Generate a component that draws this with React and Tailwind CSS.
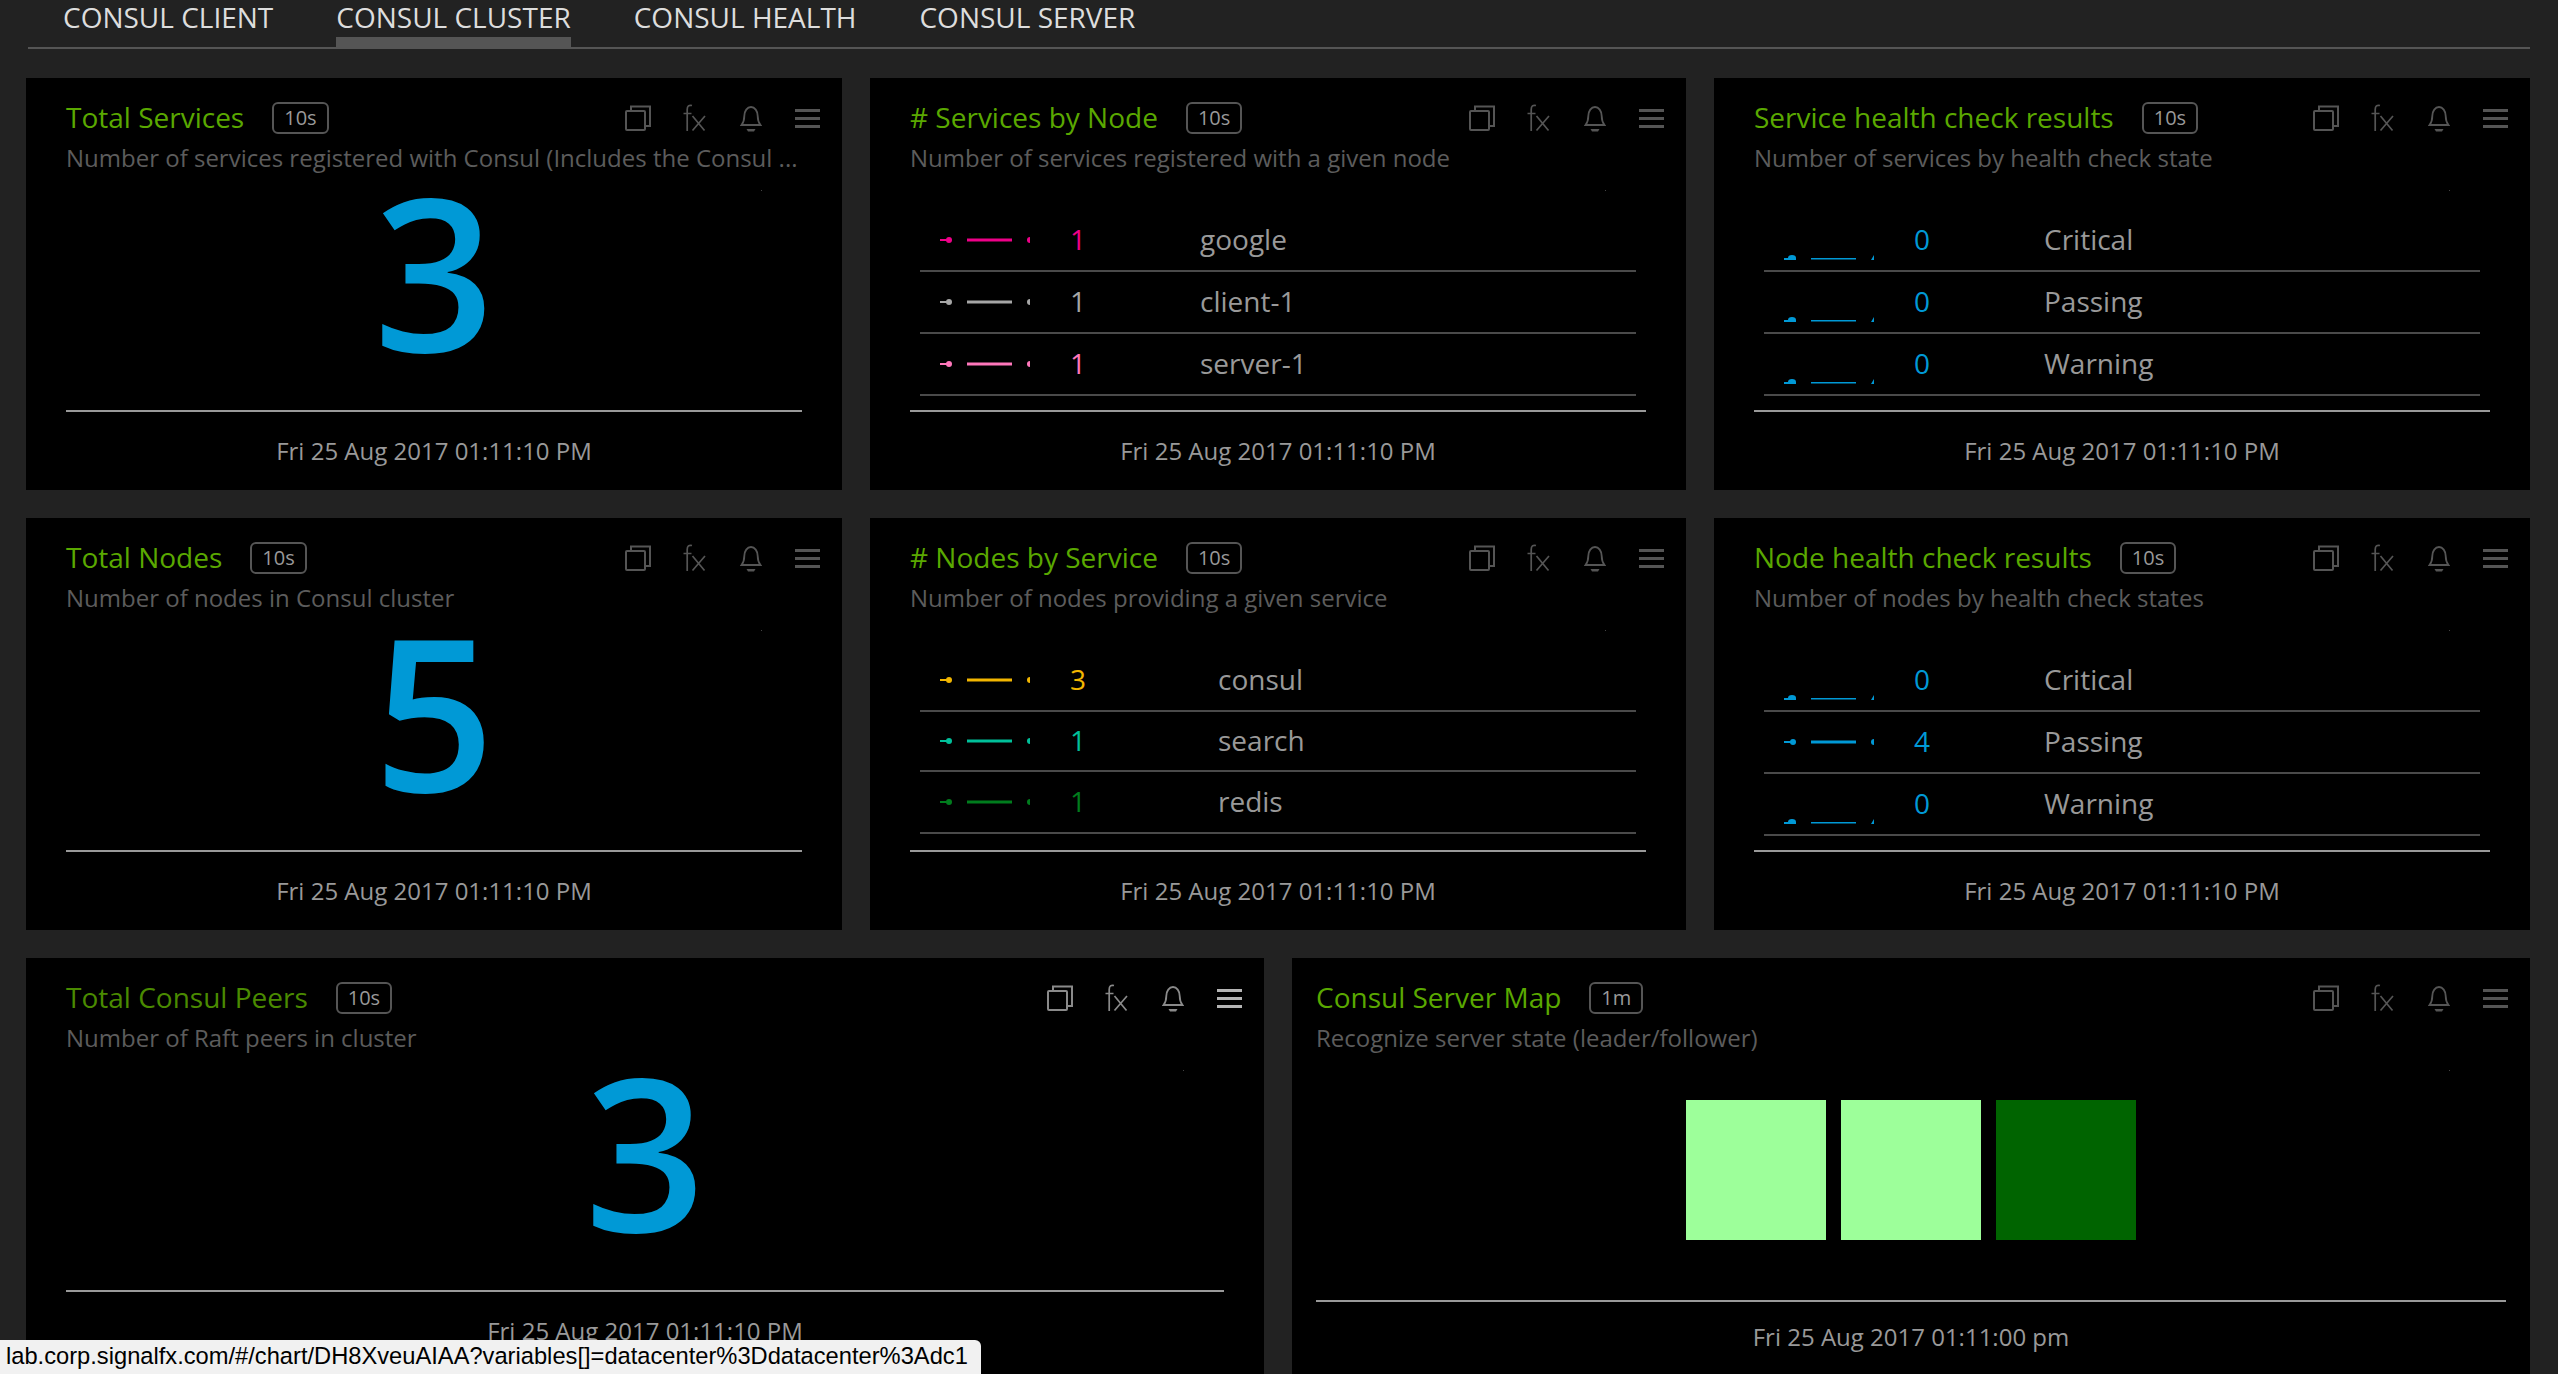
const font = { fontFamily: '"Open Sans", sans-serif' };

const CopyIcon = () => (
  <svg width="28" height="28" viewBox="0 0 28 28" fill="none" stroke="currentColor" strokeWidth="2">
    <rect x="2" y="7" width="19" height="19" rx="1" />
    <path d="M7 7V2.5h19V22h-5" />
  </svg>
);

const FxIcon = () => (
  <svg width="24" height="28" viewBox="0 0 24 28" fill="none" stroke="currentColor" strokeWidth="1.7">
    <path d="M9 1.500C6 .8 4.200 2 4.200 5.500V27M0.500 9.500h8M9.500 12l12 14.500M22 12L9.500 26.500" />
  </svg>
);

const BellIcon = () => (
  <svg width="22" height="28" viewBox="0 0 22 28" fill="none" stroke="currentColor" strokeWidth="1.8">
    <path d="M1.500 21c2-2.500 2.800-4.500 2.800-9 0-5 3-9 6.700-9s6.700 4 6.700 9c0 4.500.8 6.500 2.800 9z" />
    <path d="M6.500 25h9l-1.500 2.500h-6z" fill="currentColor" stroke="none" />
  </svg>
);

const MenuIcon = () => (
  <div className="flex w-[25px] flex-col gap-[5px]">
    <div className="h-[3px] bg-current" />
    <div className="h-[3px] bg-current" />
    <div className="h-[3px] bg-current" />
  </div>
);

const ChartIcons = ({ bright }) => (
  <div className={`flex items-center ${bright ? "text-[#b5b5b5]" : "text-[#555]"}`}>
    <div className={bright ? "text-[#8a8a8a]" : ""}>
      <CopyIcon />
    </div>
    <div className={`ml-[31px] ${bright ? "text-[#8a8a8a]" : ""}`}>
      <FxIcon />
    </div>
    <div className={`ml-[33px] ${bright ? "text-[#8a8a8a]" : ""}`}>
      <BellIcon />
    </div>
    <div className="ml-[33px]">
      <MenuIcon />
    </div>
  </div>
);

const Spark = ({ color, low }) => (
  <svg width="92" height="44" viewBox="0 0 92 44" className="shrink-0" fill={color}>
    {low ? (
      <>
        <rect x="0" y="41" width="12" height="2" />
        <path d="M4 41a4 3 0 0 1 8 0z" />
        <rect x="27" y="41" width="45" height="1.500" />
        <path d="M87 43l3-5v5z" />
      </>
    ) : (
      <>
        <rect x="0" y="22" width="8" height="2" />
        <circle cx="9" cy="23" r="3" />
        <rect x="27" y="21.500" width="45" height="3" />
        <path d="M90 20a3 3 0 0 0 0 6z" />
      </>
    )}
  </svg>
);

const Panel = ({ title, res, desc, footer, bright, dim, children, map }) => (
  <div
    className={`relative flex min-w-0 flex-col bg-black ${map ? "h-[420px] pl-[24px] pr-[24px]" : "h-[412px] px-[40px]"} ${bright ? "h-[420px]" : ""}`}
    style={font}
  >
    <div className="flex h-[59px] shrink-0 items-end justify-between">
      <div className="flex items-center">
        <span className={`text-[28px] leading-[40px] ${dim ? "text-[#4a8a00]" : "text-[#5aa800]"}`}>{title}</span>
        <span className="ml-[28px] mt-[1px] flex h-[32px] items-center rounded-[6px] border-2 border-[#555] px-[10px] text-[20px] text-[#999]">
          {res}
        </span>
      </div>
      <div className={`mb-[5px] ${map ? "-mr-[2px]" : "-mr-[18px]"}`}>
        <ChartIcons bright={bright} />
      </div>
    </div>
    <p className="mt-[2px] shrink-0 truncate text-[24px] leading-[38px] text-[#5c5c5c]">{desc}</p>
    <div className="absolute right-[80px] top-[112px] h-px w-px bg-[#444]" />
    <div className={`shrink-0 ${map ? "h-[243px]" : "h-[233px]"}`}>{children}</div>
    <div className="h-[2px] shrink-0 bg-[#999]" />
    <div className={`flex shrink-0 items-center justify-center text-[24px] text-[#999] ${map ? "h-[70px]" : "h-[78px]"}`}>{footer}</div>
  </div>
);

const BigNumber = ({ value }) => (
  <div className="flex h-full items-center justify-center">
    <span className="-mt-[48px] text-[212px] font-semibold leading-none text-[#0099d6]">{value}</span>
  </div>
);

const ListChart = ({ rows, labelLeft, low, bottom }) => (
  <div className={`flex h-full flex-col justify-end px-[10px] ${bottom || "pb-[14px]"}`}>
    {rows.map((row) => (
      <div key={row.label} className={`flex items-center border-b-2 border-[#4a4a4a] pb-[2px] pl-[20px] text-[28px] ${row.h || "h-[62px]"}`}>
        <Spark color={row.color} low={low && row.value === 0} />
        <span className="ml-[38px] w-[40px] shrink-0" style={{ color: row.color }}>
          {row.value}
        </span>
        <span className={`${labelLeft} text-[#999]`}>{row.label}</span>
      </div>
    ))}
  </div>
);

const NODE_ROWS = [
  { label: "google", value: 1, color: "#ee0088" },
  { label: "client-1", value: 1, color: "#a6a6a6" },
  { label: "server-1", value: 1, color: "#ff77bb" },
];

const SERVICE_ROWS = [
  { label: "consul", value: 3, color: "#f2b600" },
  { label: "search", value: 1, color: "#00c09a", h: "h-[60px]" },
  { label: "redis", value: 1, color: "#007c1d" },
];

const BLUE = "#0099d6";
const STATE = (a, b, c) => [
  { label: "Critical", value: a, color: BLUE },
  { label: "Passing", value: b, color: BLUE },
  { label: "Warning", value: c, color: BLUE },
];

const STAMP = "Fri 25 Aug 2017 01:11:10 PM";

export default function App() {
  return (
    <div className="relative h-[1374px] overflow-hidden bg-[#222]" style={font}>
      <div className="mx-[28px] flex h-[49px] items-start gap-[63px] border-b-2 border-[#555] pl-[35px] text-[28px] leading-[34px] text-[#ddd]">
        <span>CONSUL CLIENT</span>
        <span className="h-[49px] border-b-[12px] border-[#555]">CONSUL CLUSTER</span>
        <span>CONSUL HEALTH</span>
        <span>CONSUL SERVER</span>
      </div>

      <div className="mt-[29px] pl-[26px] pr-[28px]">
        <div className="grid grid-cols-3 gap-[28px]">
          <Panel title="Total Services" res="10s" desc="Number of services registered with Consul (Includes the Consul ..." footer={STAMP}>
            <BigNumber value="3" />
          </Panel>
          <Panel title="# Services by Node" res="10s" desc="Number of services registered with a given node" footer={STAMP}>
            <ListChart rows={NODE_ROWS} labelLeft="ml-[90px]" />
          </Panel>
          <Panel title="Service health check results" res="10s" desc="Number of services by health check state" footer={STAMP}>
            <ListChart rows={STATE(0, 0, 0)} labelLeft="ml-[90px]" low />
          </Panel>
          <Panel title="Total Nodes" res="10s" desc="Number of nodes in Consul cluster" footer={STAMP}>
            <BigNumber value="5" />
          </Panel>
          <Panel title="# Nodes by Service" res="10s" desc="Number of nodes providing a given service" footer={STAMP}>
            <ListChart rows={SERVICE_ROWS} labelLeft="ml-[108px]" bottom="pb-[16px]" />
          </Panel>
          <Panel title="Node health check results" res="10s" desc="Number of nodes by health check states" footer={STAMP}>
            <ListChart rows={STATE(0, 4, 0)} labelLeft="ml-[90px]" low />
          </Panel>
        </div>

        <div className="mt-[28px] grid grid-cols-2 gap-[28px]">
          <Panel title="Total Consul Peers" res="10s" desc="Number of Raft peers in cluster" footer={STAMP} bright dim>
            <BigNumber value="3" />
          </Panel>
          <Panel title="Consul Server Map" res="1m" desc="Recognize server state (leader/follower)" footer="Fri 25 Aug 2017 01:11:00 pm" map>
            <div className="flex h-full items-start justify-center gap-[15px] pt-[43px]">
              <div className="h-[140px] w-[140px] bg-[#9dff9a]" />
              <div className="h-[140px] w-[140px] bg-[#9dff9a]" />
              <div className="h-[140px] w-[140px] bg-[#006400]" />
            </div>
          </Panel>
        </div>
      </div>

      <div className="absolute bottom-0 left-0 flex h-[34px] w-[981px] items-center rounded-tr-[6px] bg-[#f1f1f1] pl-[6px] text-[23.7px] text-black" style={{ fontFamily: '"Liberation Sans", sans-serif' }}>
        lab.corp.signalfx.com/#/chart/DH8XveuAIAA?variables[]=datacenter%3Ddatacenter%3Adc1
      </div>
    </div>
  );
}
